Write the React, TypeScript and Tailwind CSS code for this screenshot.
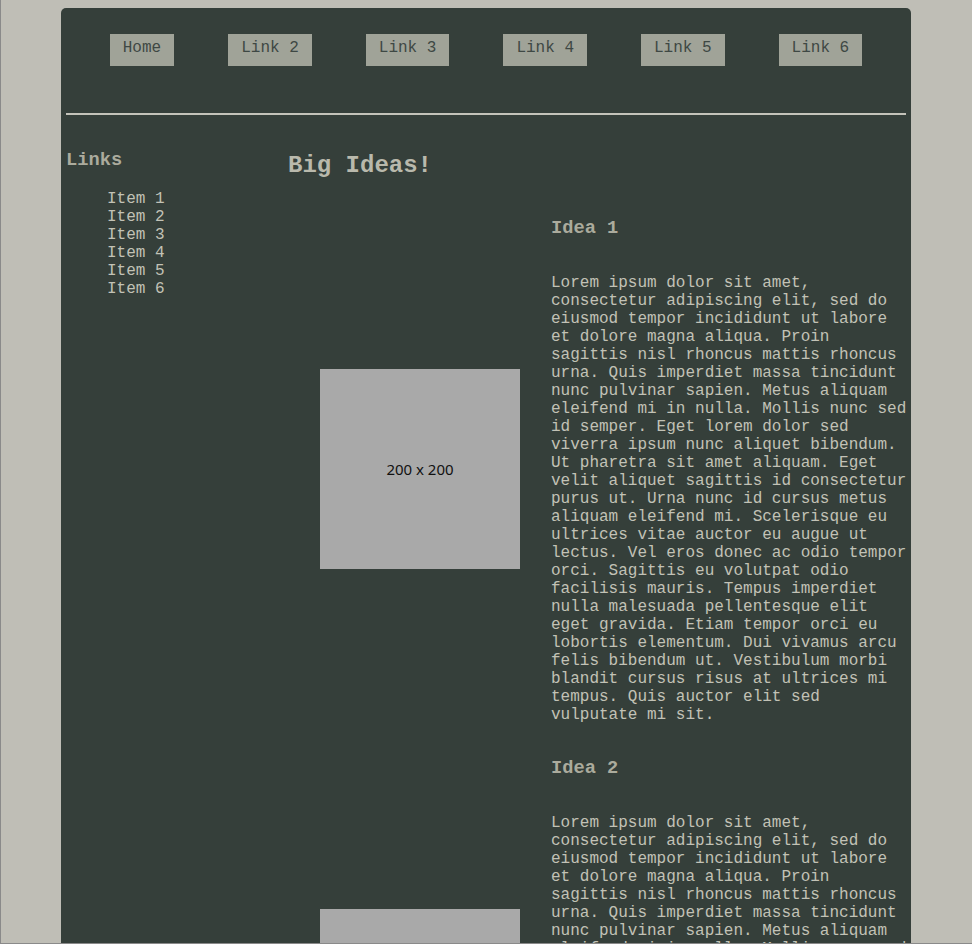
const navLinks = ['Home', 'Link 2', 'Link 3', 'Link 4', 'Link 5', 'Link 6']
const sideItems = ['Item 1', 'Item 2', 'Item 3', 'Item 4', 'Item 5', 'Item 6']

const lorem =
  'Lorem ipsum dolor sit amet, consectetur adipiscing elit, sed do eiusmod tempor incididunt ut labore et dolore magna aliqua. Proin sagittis nisl rhoncus mattis rhoncus urna. Quis imperdiet massa tincidunt nunc pulvinar sapien. Metus aliquam eleifend mi in nulla. Mollis nunc sed id semper. Eget lorem dolor sed viverra ipsum nunc aliquet bibendum. Ut pharetra sit amet aliquam. Eget velit aliquet sagittis id consectetur purus ut. Urna nunc id cursus metus aliquam eleifend mi. Scelerisque eu ultrices vitae auctor eu augue ut lectus. Vel eros donec ac odio tempor orci. Sagittis eu volutpat odio facilisis mauris. Tempus imperdiet nulla malesuada pellentesque elit eget gravida. Etiam tempor orci eu lobortis elementum. Dui vivamus arcu felis bibendum ut. Vestibulum morbi blandit cursus risus at ultrices mi tempus. Quis auctor elit sed vulputate mi sit.'

const ideas = ['Idea 1', 'Idea 2']

export default function App() {
  return (
    <div className="h-[944px] overflow-hidden border-l border-b border-[#8a8a8a] bg-[#bfbeb6] pt-2 font-['Liberation_Mono','Courier_New',monospace] text-[#c2c2b6]">
      <div className="ml-[60px] h-[936px] w-[850px] overflow-hidden rounded-t-[5px] bg-[#353f3a] px-[5px]">
        {/* top nav */}
        <header className="border-b-2 border-[#c4c3ba] pt-[26px] pb-[47px]">
          <nav className="flex justify-center gap-[54px]">
            {navLinks.map((link) => (
              <a
                key={link}
                className="h-[32px] bg-[#a0a398] px-[13px] pt-[5px] text-[16px] leading-[18px] whitespace-pre text-[#3e4844]"
              >
                {link}
              </a>
            ))}
          </nav>
        </header>

        <div className="flex">
          {/* sidebar */}
          <aside className="w-[222px] shrink-0 pt-[35px]">
            <h3 className="text-[18.72px] leading-[21px] font-bold text-[#abab9d]">Links</h3>
            <ul className="mt-[19px] pl-[41px]">
              {sideItems.map((item) => (
                <li key={item} className="text-[16px] leading-[18px] whitespace-pre">
                  {item}
                </li>
              ))}
            </ul>
          </aside>

          {/* main */}
          <main className="flex-1 pt-[37px]">
            <h2 className="text-[24px] leading-[27px] font-bold text-[#b9b9ac]">Big Ideas!</h2>
            <div className="mt-[20px]">
              {ideas.map((idea) => (
                <div key={idea} className="flex items-center">
                  <div className="w-[263px] shrink-0 pl-[32px]">
                    <div className="flex h-[200px] w-[200px] items-center justify-center bg-[#a9a9a9] font-['Noto_Sans',sans-serif] text-[15px] text-[#111]">
                      200 x 200
                    </div>
                  </div>
                  <div className="w-[356px] shrink-0 pt-[19px] pb-[15px]">
                    <h3 className="text-[18.72px] leading-[21px] font-bold text-[#abab9d]">{idea}</h3>
                    <p className="mt-[35px] text-[16px] leading-[18px]">{lorem}</p>
                  </div>
                </div>
              ))}
            </div>
          </main>
        </div>
      </div>
    </div>
  )
}
